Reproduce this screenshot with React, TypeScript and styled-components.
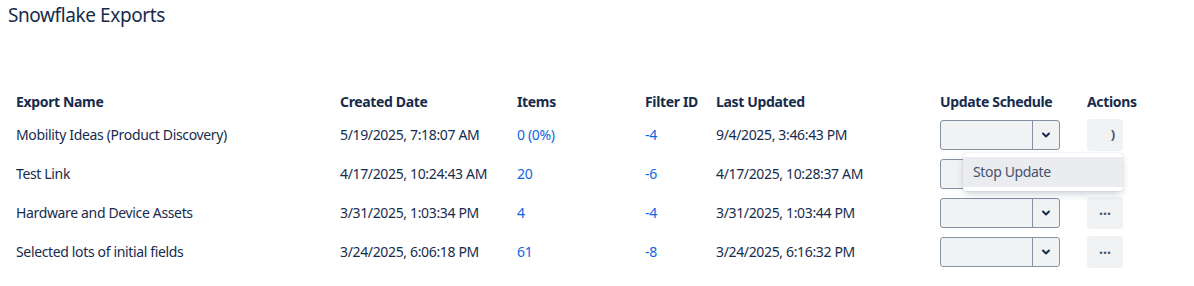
import React from "react";
import styled, { createGlobalStyle } from "styled-components";

const GlobalStyle = createGlobalStyle`
  body {
    margin: 0;
    background: #ffffff;
    font-family: "Noto Sans", "Open Sans", sans-serif;
    color: #172b4d;
  }
`;

const Page = styled.div`
  width: 1194px;
  height: 286px;
  overflow: hidden;
`;

const Title = styled.h1`
  margin: 0;
  padding: 1px 8px 0;
  font-size: 19px;
  letter-spacing: -0.4px;
  font-weight: 400;
  line-height: 28px;
  color: #172b4d;
`;

const Table = styled.div`
  margin-top: 58px;
  padding: 0 8px;
`;

const COLS = "324px 177px 128px 71px 224px 147px 1fr";

const Row = styled.div<{ $header?: boolean }>`
  display: grid;
  grid-template-columns: ${COLS};
  align-items: center;
  height: ${(p) => (p.$header ? "28px" : "39px")};
  font-size: 14px;
  letter-spacing: -0.35px;
  font-weight: ${(p) => (p.$header ? 700 : 400)};
`;

const Cell = styled.div<{ $link?: boolean }>`
  position: relative;
  padding-left: 8px;
  white-space: nowrap;
  color: ${(p) => (p.$link ? "#0c66e4" : "#172b4d")};
`;

const Select = styled.div`
  display: flex;
  width: 120px;
  height: 30px;
  box-sizing: border-box;
  border: 1px solid #8590a2;
  border-radius: 3px;
  background: #f1f2f4;
`;

const SelectValue = styled.div`
  flex: 1;
`;

const SelectArrow = styled.div`
  width: 26px;
  border-left: 1px solid #8590a2;
  display: flex;
  align-items: center;
  justify-content: center;
  color: #172b4d;
`;

const ActionButton = styled.button<{ $loading?: boolean }>`
  width: 36px;
  height: 32px;
  border: none;
  border-radius: 3px;
  background: #f1f2f4;
  color: #44546f;
  font-family: inherit;
  font-size: ${(p) => (p.$loading ? "13px" : "14px")};
  font-weight: 700;
  line-height: 1;
  padding: ${(p) => (p.$loading ? "0 0 0 16px" : "0 0 6px")};
  display: flex;
  align-items: center;
  justify-content: center;
`;

const Menu = styled.div`
  position: absolute;
  top: 33px;
  left: 31px;
  width: 160px;
  padding: 4px 0;
  background: #ffffff;
  border-radius: 3px;
  box-shadow: 0 4px 8px -2px rgba(9, 30, 66, 0.25),
    0 0 1px rgba(9, 30, 66, 0.31);
  z-index: 10;
`;

const MenuItem = styled.div`
  height: 30px;
  padding-left: 10px;
  display: flex;
  align-items: center;
  background: #ebecf0;
  font-size: 14px;
  font-weight: 400;
  color: #44546f;
`;

const Chevron = () => (
  <svg width="10" height="10" viewBox="0 0 10 10">
    <path
      d="M2 3.5 L5 6.5 L8 3.5"
      fill="none"
      stroke="currentColor"
      strokeWidth="2"
      strokeLinecap="round"
      strokeLinejoin="round"
    />
  </svg>
);

const rows = [
  {
    name: "Mobility Ideas (Product Discovery)",
    created: "5/19/2025, 7:18:07 AM",
    items: "0 (0%)",
    filter: "-4",
    updated: "9/4/2025, 3:46:43 PM",
  },
  {
    name: "Test Link",
    created: "4/17/2025, 10:24:43 AM",
    items: "20",
    filter: "-6",
    updated: "4/17/2025, 10:28:37 AM",
  },
  {
    name: "Hardware and Device Assets",
    created: "3/31/2025, 1:03:34 PM",
    items: "4",
    filter: "-4",
    updated: "3/31/2025, 1:03:44 PM",
  },
  {
    name: "Selected lots of initial fields",
    created: "3/24/2025, 6:06:18 PM",
    items: "61",
    filter: "-8",
    updated: "3/24/2025, 6:16:32 PM",
  },
];

export default function App() {
  return (
    <Page>
      <GlobalStyle />
      <Title>Snowflake Exports</Title>
      <Table>
        <Row $header>
          <Cell>Export Name</Cell>
          <Cell>Created Date</Cell>
          <Cell>Items</Cell>
          <Cell>Filter ID</Cell>
          <Cell>Last Updated</Cell>
          <Cell>Update Schedule</Cell>
          <Cell>Actions</Cell>
        </Row>
        {rows.map((r, i) => (
          <Row key={r.name}>
            <Cell>{r.name}</Cell>
            <Cell>{r.created}</Cell>
            <Cell $link>{r.items}</Cell>
            <Cell $link>{r.filter}</Cell>
            <Cell>{r.updated}</Cell>
            <Cell>
              <Select>
                <SelectValue />
                <SelectArrow>
                  <Chevron />
                </SelectArrow>
              </Select>
              {i === 0 && (
                <Menu>
                  <MenuItem>Stop Update</MenuItem>
                </Menu>
              )}
            </Cell>
            <Cell>
              {i === 0 ? (
                <ActionButton $loading>)</ActionButton>
              ) : (
                <ActionButton>...</ActionButton>
              )}
            </Cell>
          </Row>
        ))}
      </Table>
    </Page>
  );
}
